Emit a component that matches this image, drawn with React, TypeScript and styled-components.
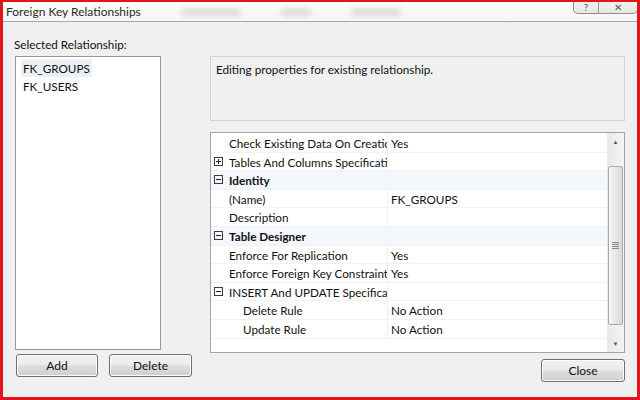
import styled, { createGlobalStyle } from "styled-components";

const GlobalStyle = createGlobalStyle`
  html, body {
    margin: 0;
    padding: 0;
  }
  body {
    background: #f0f0f0;
    font-family: Lato, "Noto Sans", sans-serif;
    font-size: 11.7px;
    color: #111;
  }
`;

type Propriedade = {
  nome: string;
  valor?: string;
  categoria?: boolean;
  expansor?: "mais" | "menos";
  recuo?: boolean;
};

const propriedades: Propriedade[] = [
  { nome: "Check Existing Data On Creation Or Re-Enabling", valor: "Yes" },
  { nome: "Tables And Columns Specification", expansor: "mais" },
  { nome: "Identity", categoria: true, expansor: "menos" },
  { nome: "(Name)", valor: "FK_GROUPS" },
  { nome: "Description", valor: "" },
  { nome: "Table Designer", categoria: true, expansor: "menos" },
  { nome: "Enforce For Replication", valor: "Yes" },
  { nome: "Enforce Foreign Key Constraint", valor: "Yes" },
  { nome: "INSERT And UPDATE Specification", expansor: "menos" },
  { nome: "Delete Rule", valor: "No Action", recuo: true },
  { nome: "Update Rule", valor: "No Action", recuo: true },
];

// Moldura da janela (borda vermelha da captura)
const Janela = styled.div`
  width: 640px;
  height: 400px;
  box-sizing: border-box;
  border: 3px solid #e3151a;
  border-top-width: 2px;
  background: #f0f0f0;
  display: flex;
  flex-direction: column;
  overflow: hidden;
`;

const BarraTitulo = styled.div`
  position: relative;
  flex: none;
  height: 19px;
  padding-left: 3px;
  display: flex;
  align-items: center;
  background: linear-gradient(#fefefe, #f6f6f6);
  border-bottom: 1px solid #a8a8a8;
  color: #2a2a2a;
  font-size: 12px;
`;

const Borrao = styled.span<{ $largura: number }>`
  display: inline-block;
  width: ${(p) => p.$largura}px;
  height: 6px;
  margin-left: 40px;
  background: #c9c9c9;
  filter: blur(3px);
  opacity: 0.8;
`;

const Controles = styled.div`
  position: absolute;
  top: -2px;
  right: -1px;
  display: flex;
  height: 13px;
  border: 1px solid #8e8e8e;
  border-top: none;
  border-radius: 0 0 5px 5px;
  background: linear-gradient(#f4f4f4, #e6e6e6);
  overflow: hidden;
`;

const BotaoControle = styled.div<{ $largura: number }>`
  width: ${(p) => p.$largura}px;
  display: flex;
  align-items: center;
  justify-content: center;
  font-size: 10px;
  color: #555;
  & + & {
    border-left: 1px solid #9a9a9a;
  }
`;

const Corpo = styled.div`
  flex: 1;
  display: grid;
  grid-template-columns: 178px 415px;
  grid-template-rows: auto auto auto;
  align-content: start;
  column-gap: 17px;
  padding: 14px 12px 0 12px;
`;

const Rotulo = styled.div`
  grid-column: 1 / 3;
  height: 16px;
  line-height: 16px;
  margin-left: -1px;
  margin-bottom: 4px;
`;

const Lista = styled.div`
  width: 146px;
  height: 294px;
  box-sizing: border-box;
  align-self: start;
  background: #fff;
  border: 1px solid #969696;
  padding: 2px 5px;
`;

const ItemLista = styled.div<{ $selecionado?: boolean }>`
  height: 18px;
  line-height: 18px;
  padding: 0 2px;
  background: ${(p) => (p.$selecionado ? "#ecf0f6" : "transparent")};
  clear: both;
  float: left;
`;

const ColunaDireita = styled.div`
  display: flex;
  flex-direction: column;
  gap: 11px;
`;

const Descricao = styled.div`
  height: 65px;
  box-sizing: border-box;
  border: 1px solid #d2d2d2;
  padding: 3px 5px;
  line-height: 18px;
`;

const Grade = styled.div`
  height: 221px;
  box-sizing: border-box;
  border: 1px solid #a3a3a3;
  background: #fff;
  display: flex;
`;

const Linhas = styled.div`
  flex: 1;
  padding-top: 1px;
`;

const Linha = styled.div<{ $categoria?: boolean }>`
  display: flex;
  height: 18.6px;
  line-height: 18px;
  box-sizing: border-box;
  border-bottom: 1px solid #f1f2f4;
  background: ${(p) => (p.$categoria ? "#f3f6fa" : "#fff")};
  font-weight: ${(p) => (p.$categoria ? 700 : 400)};
`;

const Margem = styled.div`
  width: 14px;
  flex: none;
  display: flex;
  align-items: center;
  justify-content: center;
`;

const Expansor = styled.div`
  width: 7px;
  height: 7px;
  border: 1px solid #3a3a3a;
  position: relative;
  &::before {
    content: "";
    position: absolute;
    left: 1px;
    right: 1px;
    top: 3px;
    height: 1px;
    background: #222;
  }
`;

const ExpansorMais = styled(Expansor)`
  &::after {
    content: "";
    position: absolute;
    top: 1px;
    bottom: 1px;
    left: 3px;
    width: 1px;
    background: #222;
  }
`;

const CelulaNome = styled.div<{ $recuo?: boolean; $cheia?: boolean }>`
  width: ${(p) => (p.$cheia ? "auto" : "163px")};
  flex: ${(p) => (p.$cheia ? 1 : "none")};
  box-sizing: border-box;
  padding-left: ${(p) => (p.$recuo ? 18 : 4)}px;
  white-space: nowrap;
  overflow: hidden;
  border-right: ${(p) => (p.$cheia ? "none" : "1px solid #eeeff1")};
`;

const CelulaValor = styled.div`
  flex: 1;
  padding-left: 3px;
  white-space: nowrap;
  overflow: hidden;
`;

const BarraRolagem = styled.div`
  width: 17px;
  flex: none;
  display: flex;
  flex-direction: column;
  background: linear-gradient(90deg, #e8e8e8, #f4f4f4);
`;

const Seta = styled.div`
  height: 17px;
  display: flex;
  align-items: center;
  justify-content: center;
  font-size: 6px;
  color: #5a5a5a;
`;

const Trilho = styled.div`
  flex: 1;
  padding: 16px 1px 10px 1px;
  display: flex;
`;

const Polegar = styled.div`
  flex: 1;
  border: 1px solid #a9a9a9;
  border-radius: 2px;
  background: linear-gradient(90deg, #f6f6f6, #e6e6e6 55%, #d8d8d8);
  display: flex;
  align-items: center;
  justify-content: center;
`;

const Pegador = styled.div`
  width: 7px;
  height: 7px;
  background: repeating-linear-gradient(#8a8a8a 0 1px, transparent 1px 2px);
`;

const Botoes = styled.div<{ $topo: number; $direita?: boolean }>`
  display: flex;
  gap: 11px;
  margin-top: ${(p) => p.$topo}px;
  padding-left: 1px;
  justify-content: ${(p) => (p.$direita ? "flex-end" : "flex-start")};
`;

const Botao = styled.button<{ $largura: number }>`
  width: ${(p) => p.$largura}px;
  height: 23px;
  padding: 0;
  font-family: inherit;
  font-size: 12px;
  color: #111;
  border: 1px solid #707070;
  border-radius: 3px;
  background: linear-gradient(#f2f2f2, #ebebeb 48%, #dddddd 52%, #cfcfcf);
  box-shadow: inset 0 0 0 1px #fcfcfc;
`;

export default function App() {
  return (
    <>
      <GlobalStyle />
      <Janela>
        <BarraTitulo>
          Foreign Key Relationships
          <Borrao $largura={60} />
          <Borrao $largura={30} />
          <Borrao $largura={50} />
          <Controles>
            <BotaoControle $largura={24}>?</BotaoControle>
            <BotaoControle $largura={38}>✕</BotaoControle>
          </Controles>
        </BarraTitulo>
        <Corpo>
          <Rotulo>Selected Relationship:</Rotulo>
          <Lista>
            <ItemLista $selecionado>FK_GROUPS</ItemLista>
            <ItemLista>FK_USERS</ItemLista>
          </Lista>
          <ColunaDireita>
            <Descricao>Editing properties for existing relationship.</Descricao>
            <Grade>
              <Linhas>
                {propriedades.map((p) => (
                  <Linha key={p.nome} $categoria={p.categoria}>
                    <Margem>
                      {p.expansor === "mais" && <ExpansorMais />}
                      {p.expansor === "menos" && <Expansor />}
                    </Margem>
                    <CelulaNome $recuo={p.recuo} $cheia={p.categoria}>
                      {p.nome}
                    </CelulaNome>
                    {!p.categoria && <CelulaValor>{p.valor}</CelulaValor>}
                  </Linha>
                ))}
              </Linhas>
              <BarraRolagem>
                <Seta>▲</Seta>
                <Trilho>
                  <Polegar>
                    <Pegador />
                  </Polegar>
                </Trilho>
                <Seta>▼</Seta>
              </BarraRolagem>
            </Grade>
          </ColunaDireita>
          <Botoes $topo={1}>
            <Botao $largura={82}>Add</Botao>
            <Botao $largura={83}>Delete</Botao>
          </Botoes>
          <Botoes $topo={6} $direita>
            <Botao $largura={84}>Close</Botao>
          </Botoes>
        </Corpo>
      </Janela>
    </>
  );
}
